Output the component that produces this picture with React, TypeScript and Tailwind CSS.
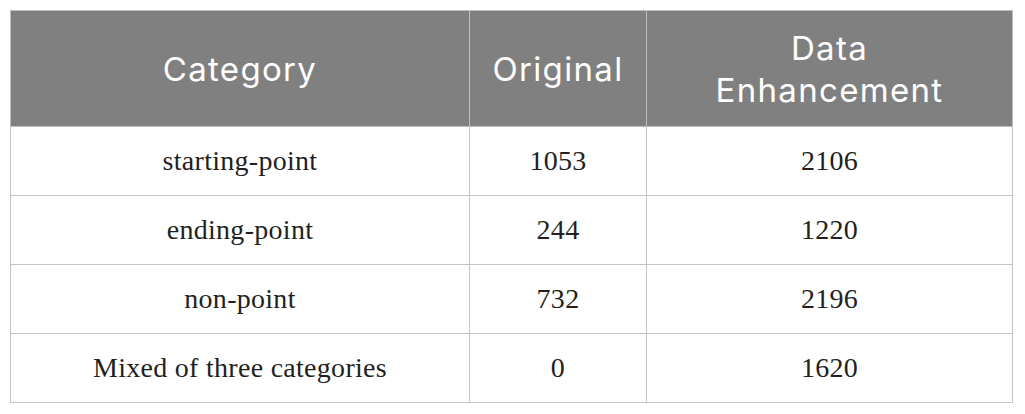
const rows = [
  { category: "starting-point", original: "1053", enhanced: "2106" },
  { category: "ending-point", original: "244", enhanced: "1220" },
  { category: "non-point", original: "732", enhanced: "2196" },
  { category: "Mixed of three categories", original: "0", enhanced: "1620" },
];

export default function App() {
  return (
    <div className="w-[1025px] h-[414px] bg-white pt-[10px] pl-[10px]">
      <table className="border-collapse table-fixed w-[1002px]">
        <colgroup>
          <col className="w-[459px]" />
          <col className="w-[177px]" />
          <col className="w-[366px]" />
        </colgroup>
        <thead>
          <tr className="h-[116px] bg-[#808080] text-white font-['Inter',sans-serif] text-[33px] leading-[42px] tracking-[0.04em]">
            <th className="border border-[#bdbdbd] font-normal px-2 text-center align-middle">Category</th>
            <th className="border border-[#bdbdbd] font-normal px-1 text-center align-middle">Original</th>
            <th className="border border-[#bdbdbd] font-normal px-[50px] text-center align-middle">Data Enhancement</th>
          </tr>
        </thead>
        <tbody className="font-['Liberation_Serif',serif] text-[28px] tracking-[0.01em] text-[#231f20]">
          {rows.map((r) => (
            <tr key={r.category} className="h-[69px]">
              <td className="border border-[#c4c4c4] text-center align-middle">{r.category}</td>
              <td className="border border-[#c4c4c4] text-center align-middle">{r.original}</td>
              <td className="border border-[#c4c4c4] text-center align-middle">{r.enhanced}</td>
            </tr>
          ))}
        </tbody>
      </table>
    </div>
  );
}
